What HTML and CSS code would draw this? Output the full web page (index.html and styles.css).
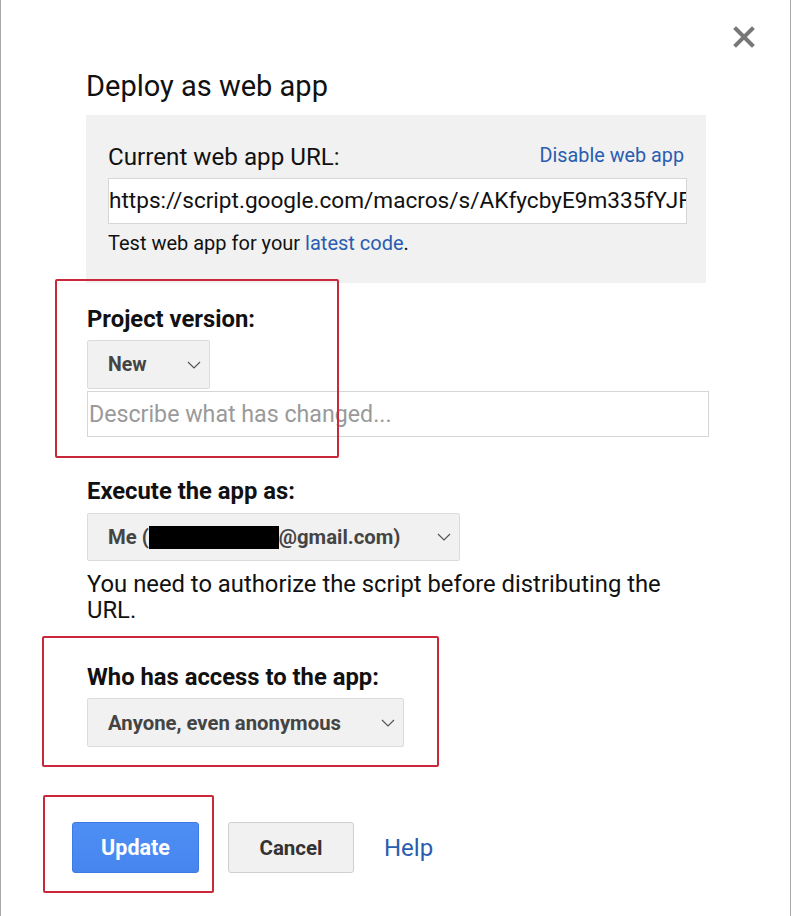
FILE: index.html
```html
<!DOCTYPE html>
<html>
<head>
<meta charset="utf-8">
<link rel="stylesheet" href="styles.css">
</head>
<body>
<div class="dialog">
  <button class="close" aria-label="Close">
    <svg width="22" height="22" viewBox="0 0 22 22"><path d="M3 3 L19 19 M19 3 L3 19" stroke="#777" stroke-width="4" stroke-linecap="square"/></svg>
  </button>
  <h1 class="title">Deploy as web app</h1>
  <div class="current">
    <div class="current-head">
      <span class="current-label">Current web app URL:</span>
      <a class="link disable">Disable web app</a>
    </div>
    <div class="url-box">https://script.google.com/macros/s/AKfycbyE9m335fYJFqW</div>
    <div class="test-line">Test web app for your <a class="link">latest code</a>.</div>
  </div>

  <div class="label first">Project version:</div>
  <div class="select sel-new"><span>New</span><svg class="chev" width="14" height="8" viewBox="0 0 14 8"><path d="M1 1 L7 7 L13 1" fill="none" stroke="#555" stroke-width="1.2"/></svg></div>
  <div class="describe">Describe what has changed...</div>

  <div class="label">Execute the app as:</div>
  <div class="select sel-me"><span class="me">Me (<span class="redact"></span>@gmail.com)</span><svg class="chev" width="14" height="8" viewBox="0 0 14 8"><path d="M1 1 L7 7 L13 1" fill="none" stroke="#555" stroke-width="1.2"/></svg></div>
  <p class="note">You need to authorize the script before distributing the URL.</p>

  <div class="label">Who has access to the app:</div>
  <div class="select sel-anyone"><span>Anyone, even anonymous</span><svg class="chev" width="14" height="8" viewBox="0 0 14 8"><path d="M1 1 L7 7 L13 1" fill="none" stroke="#555" stroke-width="1.2"/></svg></div>

  <div class="actions">
    <button class="btn primary">Update</button>
    <button class="btn">Cancel</button>
    <a class="link help">Help</a>
  </div>

  <div class="mark mark1"></div>
  <div class="mark mark2"></div>
  <div class="mark mark3"></div>
</div>
</body>
</html>
```

FILE: styles.css
```css
* { box-sizing: border-box; }
html, body { margin: 0; padding: 0; background: #fff; }
body { font-family: Roboto, "Noto Sans", "Liberation Sans", sans-serif; color: #111; }

.dialog {
  position: relative;
  width: 791px;
  height: 916px;
  border-left: 1px solid #a8a8a8;
  border-right: 1px solid #a8a8a8;
  padding: 68px 0 0 85px;
  overflow: hidden;
}

.close {
  position: absolute;
  top: 26px;
  right: 35px;
  width: 22px;
  height: 22px;
  padding: 0;
  border: 0;
  background: none;
}
.close svg { display: block; }

.title {
  margin: 0;
  font-weight: 400;
  font-size: 29px;
  line-height: 36px;
  color: #111;
}

.link { color: #2a5db0; text-decoration: none; }

.current {
  margin-top: 11px;
  width: 620px;
  background: #f1f1f1;
  padding: 28px 19px 28px 22px;
}
.current-head {
  display: flex;
  justify-content: space-between;
  align-items: center;
  height: 28px;
}
.current-label { font-size: 24.2px; }
.disable { font-size: 19.8px; position: relative; top: -2px; right: 3px; }

.url-box {
  margin-top: 7px;
  height: 46px;
  background: #fff;
  border: 1px solid #d6d6d6;
  padding-left: 0;
  font-size: 22.6px;
  line-height: 44px;
  white-space: nowrap;
  overflow: hidden;
}
.test-line {
  margin-top: 7px;
  font-size: 20px;
  line-height: 24px;
}

.label {
  margin-top: 40px;
  padding-left: 1px;
  font-weight: 700;
  font-size: 23.8px;
  line-height: 28px;
}
.label.first { margin-top: 22px; }

.select {
  margin-top: 7px;
  height: 49px;
  display: flex;
  align-items: center;
  justify-content: space-between;
  background: #f1f1f1;
  border: 1px solid #dcdcdc;
  border-radius: 2px;
  padding: 0 8px 0 20px;
  margin-left: 1px;
  font-weight: 700;
  font-size: 20.3px;
  color: #444;
}
.sel-new { width: 123px; }
.sel-new span { font-size: 19.5px; }
.sel-me { width: 373px; height: 48px; margin-top: 8px; }
.sel-anyone { width: 317px; }
.chev { display: block; }

.me { display: flex; align-items: center; }
.redact {
  display: inline-block;
  width: 130px;
  height: 23px;
  background: #000;
}

.describe {
  margin-top: 2px;
  margin-left: 1px;
  width: 622px;
  height: 46px;
  border: 1px solid #d6d6d6;
  padding-left: 1px;
  font-size: 23.2px;
  line-height: 44px;
  color: #9a9a9a;
}

.note {
  margin: 10px 0 0 1px;
  width: 600px;
  font-size: 23.8px;
  line-height: 26px;
}

.actions {
  margin-top: 75px;
  margin-left: -14px;
  display: flex;
  align-items: center;
}
.btn {
  height: 51px;
  width: 126px;
  border: 1px solid #d0d0d0;
  border-radius: 3px;
  background: #f1f1f1;
  font-family: inherit;
  font-weight: 700;
  font-size: 20.5px;
  color: #333;
  margin-right: 29px;
  padding: 0;
}
.btn.primary {
  width: 127px;
  font-size: 21.5px;
  background: linear-gradient(#4d8ff5, #4785ee);
  border-color: #3d7ae6;
  color: #fff;
}
.help { font-size: 24px; margin-left: 1px; }

.mark {
  position: absolute;
  border: 2px solid #c9283a;
  border-radius: 2px;
  pointer-events: none;
}
.mark1 { left: 54px; top: 279px; width: 284px; height: 179px; }
.mark2 { left: 41px; top: 636px; width: 397px; height: 131px; }
.mark3 { left: 42px; top: 795px; width: 171px; height: 98px; }
```
